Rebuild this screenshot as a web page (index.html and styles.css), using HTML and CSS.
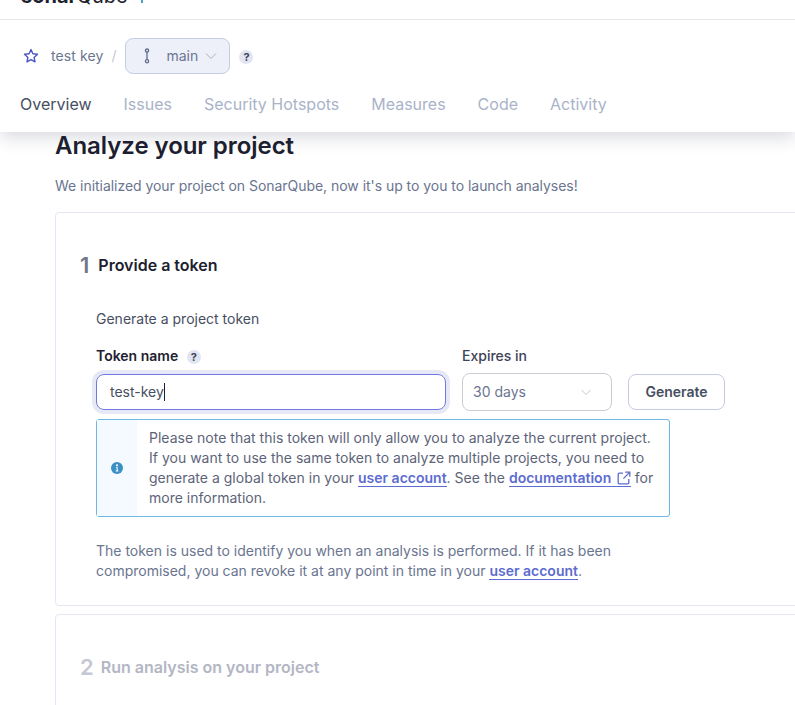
FILE: index.html
```html
<!DOCTYPE html>
<html lang="en">
<head>
<meta charset="utf-8">
<title>Analyze your project</title>
<link rel="stylesheet" href="styles.css">
</head>
<body>
<header class="header">
  <div class="logobar">
    <span class="logo"><b>sonar</b>Qube</span>
    <span class="logo-mark"></span>
  </div>
  <div class="crumbs">
    <svg class="star" width="16" height="16" viewBox="0 0 16 16"><path d="M8 1.6l1.9 4.2 4.6.5-3.4 3.1.9 4.5L8 11.6l-4 2.3.9-4.5L1.5 6.3l4.6-.5z" fill="none" stroke="#4b55c4" stroke-width="1.4" stroke-linejoin="round"/></svg>
    <span class="crumb-name">test key</span>
    <span class="crumb-sep">/</span>
    <button class="branch">
      <svg width="10" height="16" viewBox="0 0 10 16"><circle cx="5" cy="2.6" r="1.6" fill="none" stroke="#5d6c8a" stroke-width="1.3"/><circle cx="5" cy="13.2" r="1.6" fill="none" stroke="#5d6c8a" stroke-width="1.3"/><path d="M5 4.2v7.4" stroke="#5d6c8a" stroke-width="1.3"/></svg>
      <span class="branch-name">main</span>
      <svg class="chev" width="12" height="12" viewBox="0 0 12 12"><path d="M1 3.5l5 5 5-5" fill="none" stroke="#a8b1c6" stroke-width="1"/></svg>
    </button>
    <span class="help help-top">?</span>
  </div>
  <nav class="nav">
    <a class="active">Overview</a>
    <a>Issues</a>
    <a>Security Hotspots</a>
    <a>Measures</a>
    <a>Code</a>
    <a>Activity</a>
  </nav>
</header>
<main class="main">
  <h1 class="title">Analyze your project</h1>
  <p class="intro">We initialized your project on SonarQube, now it's up to you to launch analyses!</p>
  <section class="card card-one">
    <h2 class="step"><span class="num">1</span>Provide a token</h2>
    <div class="step-body">
      <p class="gen">Generate a project token</p>
      <div class="form">
        <div class="field">
          <label class="label label-dark">Token name <span class="help help-label">?</span></label>
          <div class="input"><span>test-key</span><i class="caret"></i></div>
        </div>
        <div class="field">
          <label class="label">Expires in</label>
          <div class="select"><span>30 days</span><svg width="12" height="12" viewBox="0 0 12 12"><path d="M1.5 4l4.5 4.5L10.5 4" fill="none" stroke="#c4c8d0" stroke-width="1"/></svg></div>
        </div>
        <button class="generate">Generate</button>
      </div>
      <div class="note">
        <div class="note-icon">
          <svg width="12" height="12" viewBox="0 0 12 12"><circle cx="6" cy="6" r="6" fill="#3a8fc4"/><circle cx="6" cy="3.3" r="1.1" fill="#fff"/><path d="M4.8 5.2h1.9v3.3h.7v.9H4.7v-.9h.9V6.1h-.8z" fill="#fff"/></svg>
        </div>
        <p class="note-text">Please note that this token will only allow you to analyze the current project. If you want to use the same token to analyze multiple projects, you need to generate a global token in your <a class="link">user account</a>. See the <a class="link">documentation <svg class="ext" width="14" height="14" viewBox="0 0 14 14"><path d="M6 2.2H2.2a1 1 0 0 0-1 1v8.6a1 1 0 0 0 1 1h8.6a1 1 0 0 0 1-1V8M8.2 1.2h4.6v4.6M12.6 1.4L6.4 7.6" fill="none" stroke="#5d6cd0" stroke-width="1.3"/></svg></a> for more information.</p>
      </div>
      <p class="explain">The token is used to identify you when an analysis is performed. If it has been compromised, you can revoke it at any point in time in your <a class="link">user account</a>.</p>
    </div>
  </section>
  <section class="card card-two">
    <h2 class="step step-off"><span class="num">2</span>Run analysis on your project</h2>
  </section>
</main>
</body>
</html>
```
FILE: styles.css
```css
* { box-sizing: border-box; }
html, body { margin: 0; height: 705px; overflow: hidden; background: #fff; }
body { font-family: Inter, "Liberation Sans", sans-serif; font-size: 14px; line-height: 20px; color: #5d6c8a; }
p, h1, h2 { margin: 0; }

.header { position: relative; z-index: 2; height: 132px; background: #fff; box-shadow: 0 6px 16px rgba(30, 40, 70, .16); }
.logobar { height: 20px; border-bottom: 1px solid #e6e8ec; padding-left: 21px; display: flex; align-items: flex-end; overflow: hidden; }
.logo { font-size: 20px; line-height: 26px; color: #1d212f; margin-bottom: 10px; width: 120px; }
.logo b { font-weight: 700; }
.logo-mark { width: 2px; height: 6px; background: #4b9fd5; margin: 0 0 16px 0; }

.crumbs { height: 36px; margin-top: 18px; padding-left: 23px; display: flex; align-items: center; }
.star { margin-right: 12px; }
.crumb-name { color: #6a7590; letter-spacing: .1px; }
.crumb-sep { color: #c4c8d4; margin: 0 9px 0 8px; width: 5px; }
.branch { width: 105px; height: 36px; display: flex; align-items: center; padding: 0 0 0 16px; background: #eef0f9; border: 1px solid #c5cbe3; border-radius: 8px; font: inherit; color: #6a7590; }
.branch-name { margin-left: 14px; }
.chev { margin-left: 7px; }
.help { display: inline-block; border-radius: 50%; background: #e1e5f2; color: #3e4357; font-weight: 700; text-align: center; }
.help-top { width: 14px; height: 14px; margin-left: 9px; margin-top: 2px; font-size: 11px; line-height: 14px; }

.nav { display: flex; gap: 32px; margin-top: 20px; padding-left: 20px; font-size: 16px; line-height: 20px; color: #aab3c9; }
.nav .active { color: #474e61; }

.main { padding-left: 55px; background: #fff; }
.title { font-size: 24px; line-height: 28px; font-weight: 600; color: #1d212f; letter-spacing: -.05px; }
.intro { color: #6a7590; line-height: 24px; margin-top: 14px; letter-spacing: -.04px; }
.card { width: 800px; border: 1px solid #e3e7f3; border-radius: 4px; background: #fff; }
.card-one { margin-top: 14px; height: 394px; padding: 0 0 0 24px; }
.card-two { margin-top: 8px; height: 120px; padding-left: 24px; }
.step { display: flex; align-items: center; font-size: 16px; font-weight: 600; color: #1d212f; margin-top: 40px; line-height: 24px; }
.step .num { font-size: 22px; color: #70778a; margin-right: 9px; }
.step-off { color: #b3b6c4; }
.step-off .num { color: #c5c7d2; margin-right: 7px; }
.step-body { padding-left: 16px; }
.gen { margin-top: 32px; color: #474e61; line-height: 20px; }
.form { display: flex; margin-top: 17px; align-items: flex-end; }
.field { display: flex; flex-direction: column; }
.label { font-weight: 500; line-height: 20px; color: #3e4357; margin-bottom: 7px; }
.label-dark { font-weight: 600; color: #1d212f; margin-bottom: 8px; }
.help-label { width: 14px; height: 14px; margin-left: 5px; font-size: 11px; line-height: 14px; }
.input { width: 350px; height: 36px; border: 1px solid #6f7bdc; border-radius: 8px; box-shadow: 0 0 0 4px #e6e8f8; display: flex; align-items: center; padding-left: 13px; color: #474e61; margin-bottom: 1px; }
.caret { width: 1px; height: 18px; background: #1d212f; }
.select { width: 150px; height: 38px; margin-left: 16px; border: 1px solid #c8ccd3; border-radius: 8px; display: flex; align-items: center; justify-content: space-between; padding: 0 19px 0 10px; color: #6a7590; }
.field:nth-child(2) .label { margin-left: 16px; }
.generate { width: 97px; height: 36px; margin: 0 0 1px 16px; background: #fff; border: 1px solid #c5cbe3; border-radius: 8px; font: inherit; font-weight: 600; color: #474e61; }
.note { width: 574px; height: 98px; margin-top: 8px; border: 1px solid #6db8e3; border-radius: 3px; display: flex; }
.note-icon { width: 40px; background: #f4faff; display: flex; align-items: center; justify-content: center; flex: none; }
.note-text { padding: 8px 12px 0 12px; color: #5d6479; line-height: 20px; letter-spacing: .01px; }
.link { color: #5d6cd0; font-weight: 600; border-bottom: 1px solid #5d6cd0; white-space: nowrap; }
.ext { vertical-align: -2px; margin-left: 2px; }
.explain { width: 540px; margin-top: 24px; color: #6a7590; line-height: 20px; }
```
